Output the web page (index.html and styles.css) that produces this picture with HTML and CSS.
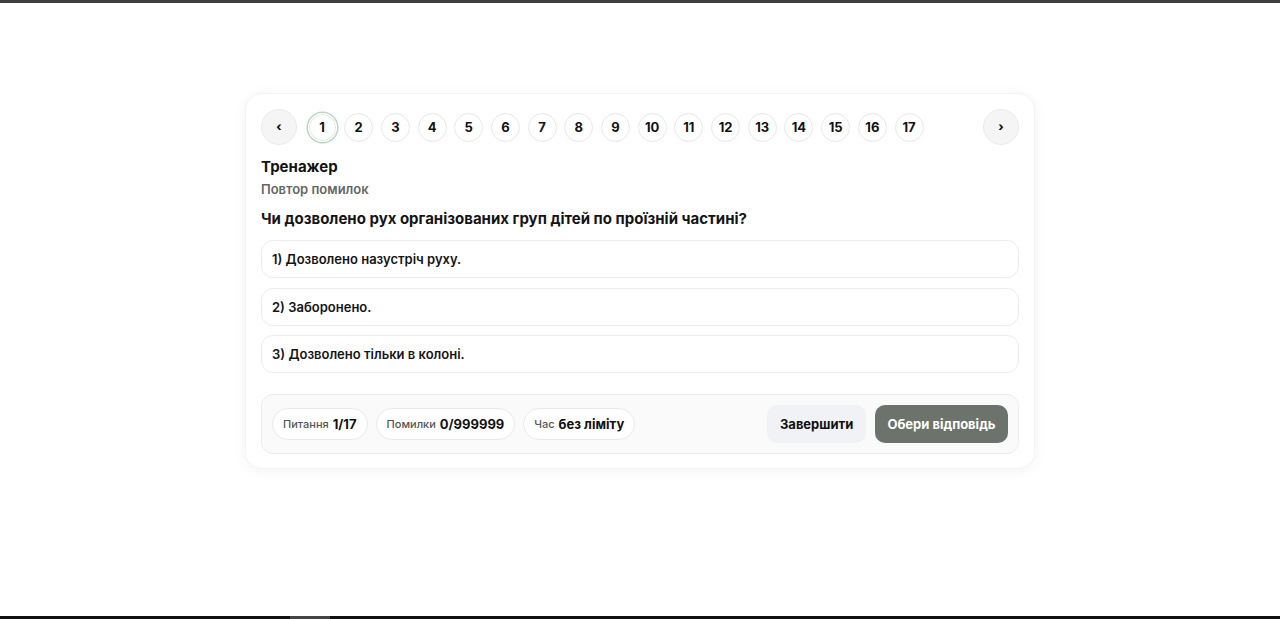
FILE: index.html
```html
<!DOCTYPE html>
<html lang="uk">
<head>
<meta charset="utf-8">
<title>Тренажер</title>
<link rel="stylesheet" href="styles.css">
</head>
<body>
<div class="topbar"></div>
<main class="page">
  <section class="card">
    <nav class="pager">
      <button class="nav-btn">&lsaquo;</button>
      <div class="nums">
        <span class="num active">1</span><span class="num">2</span><span class="num">3</span><span class="num">4</span><span class="num">5</span><span class="num">6</span><span class="num">7</span><span class="num">8</span><span class="num">9</span><span class="num">10</span><span class="num">11</span><span class="num">12</span><span class="num">13</span><span class="num">14</span><span class="num">15</span><span class="num">16</span><span class="num">17</span>
      </div>
      <button class="nav-btn next">&rsaquo;</button>
    </nav>
    <h1 class="title">Тренажер</h1>
    <div class="subtitle">Повтор помилок</div>
    <h2 class="question">Чи дозволено рух організованих груп дітей по проїзній частині?</h2>
    <div class="options">
      <div class="option">1) Дозволено назустріч руху.</div>
      <div class="option">2) Заборонено.</div>
      <div class="option">3) Дозволено тільки в колоні.</div>
    </div>
    <div class="footer">
      <div class="chips">
        <span class="chip"><span class="lbl">Питання</span> <b>1/17</b></span>
        <span class="chip"><span class="lbl">Помилки</span> <b>0/999999</b></span>
        <span class="chip"><span class="lbl">Час</span> <b>без ліміту</b></span>
      </div>
      <div class="actions">
        <button class="btn btn-light">Завершити</button>
        <button class="btn btn-dark">Обери відповідь</button>
      </div>
    </div>
  </section>
</main>
<div class="bottombar"><span class="thumb"></span></div>
</body>
</html>
```
FILE: styles.css
```css
* { box-sizing: border-box; }
html, body { margin: 0; padding: 0; height: 100%; }
body {
  font-family: Inter, "Noto Sans", "Liberation Sans", sans-serif;
  color: #141414;
  background: #fff;
  display: flex;
  flex-direction: column;
  height: 619px;
  overflow: hidden;
}
.topbar { height: 3px; background: #3f3f3f; flex: none; }
.page {
  flex: 1;
  display: flex;
  justify-content: center;
  align-items: flex-start;
  padding-top: 90px;
}
.card {
  width: 790px;
  background: #fff;
  border-radius: 16px;
  border: 1px solid #f3f3f3;
  box-shadow: 0 2px 14px rgba(0,0,0,0.05);
  padding: 15px 15px 14px 15px;
}
.pager { display: flex; align-items: center; }
.nav-btn {
  width: 36px; height: 36px;
  border-radius: 50%;
  border: 1px solid #e9ecea;
  background: #f4f5f4;
  font: 800 12px/1 Inter, sans-serif;
  color: #111;
  padding: 0 0 1px;
  display: flex; align-items: center; justify-content: center;
}
.next { margin-left: auto; }
.nums { display: flex; gap: 7.7px; margin-left: 10.5px; }
.num {
  width: 29px; height: 29px;
  border-radius: 50%;
  border: 1px solid #e8e8e8;
  display: flex; align-items: center; justify-content: center;
  font-size: 13px; font-weight: 700;
  color: #111;
}
.num.active { border-color: #fff; box-shadow: 0 0 0 1.5px #b7d6c3, inset 0 0 0 1px #dcebe1; }
.title { font-size: 15px; line-height: 20px; font-weight: 700; margin: 12px 0 0; }
.subtitle { font-size: 13px; line-height: 18px; font-weight: 600; color: #666; margin-top: 3px; }
.question { font-size: 15px; line-height: 20px; font-weight: 700; margin: 11px 0 0; }
.options { display: flex; flex-direction: column; gap: 9.5px; margin-top: 11px; }
.option {
  height: 38px;
  border: 1px solid #ececec;
  border-radius: 12px;
  display: flex; align-items: center;
  padding: 0 10px;
  font-size: 13px; font-weight: 600;
}
.footer {
  margin-top: 21px;
  background: #fafafa;
  border: 1px solid #ececec;
  border-radius: 12px;
  padding: 10px;
  display: flex; align-items: center; justify-content: space-between;
}
.chips { display: flex; gap: 8px; }
.chip {
  height: 32px;
  border-radius: 16px;
  border: 1px solid #e9e9e9;
  background: #fff;
  display: inline-flex; align-items: center; gap: 4px;
  padding: 0 10px;
  font-size: 13px;
}
.chip .lbl { font-size: 11px; font-weight: 500; color: #555; }
.chip b { font-weight: 700; color: #111; }
.actions { display: flex; gap: 9px; }
.btn {
  height: 38px;
  border: none;
  border-radius: 10px;
  padding: 0 12.5px;
  font: 700 13px/1 Inter, sans-serif;
}
.btn-light { background: #f1f2f5; color: #111; }
.btn-dark { background: #6b736c; color: #fff; }
.bottombar { height: 3px; background: #111; flex: none; position: relative; }
.bottombar .thumb { position: absolute; left: 290px; top: 0; width: 40px; height: 3px; background: #444; }
```
